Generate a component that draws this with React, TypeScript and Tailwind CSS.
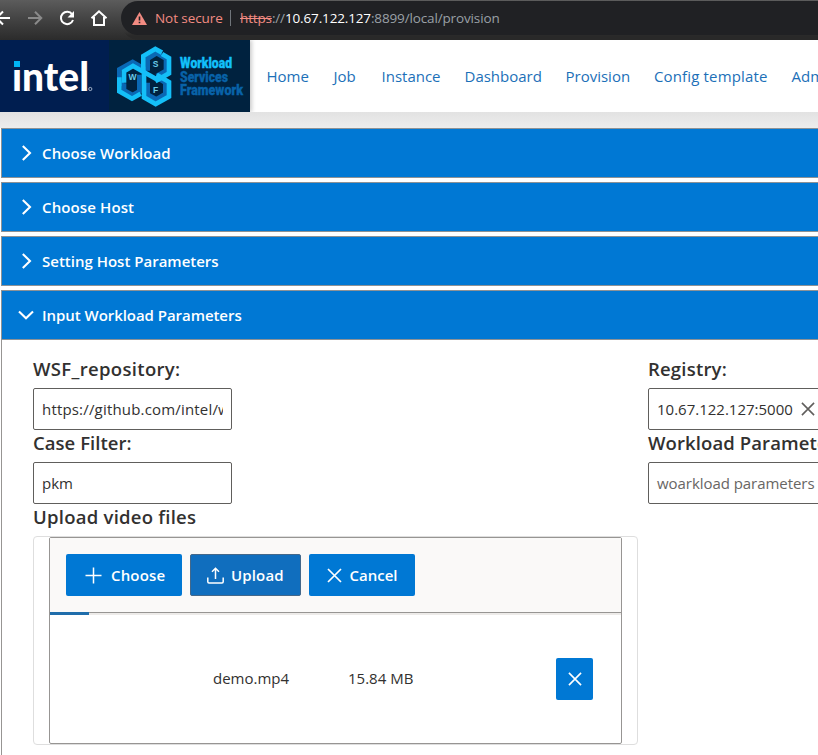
import React from "react";

const sans = "font-['Open_Sans','Noto_Sans',sans-serif]";

function Chevron({ down = false }: { down?: boolean }) {
  return (
    <svg width="16" height="16" viewBox="0 0 16 16" fill="none" stroke="#fff" strokeWidth="2.1" className="shrink-0">
      {down ? <path d="M1 4.500 8 11.200 15 4.500" /> : <path d="M4.800 1 12 8 4.800 15" />}
    </svg>
  );
}

function Cross({ color = "#fff", size = 15 }: { color?: string; size?: number }) {
  return (
    <svg width={size} height={size} viewBox="0 0 15 15" fill="none" stroke={color} strokeWidth="1.7" className="shrink-0">
      <path d="M1 1l13 13M14 1L1 14" />
    </svg>
  );
}

function BrowserBar() {
  return (
    <div className="flex h-10 w-full bg-linear-to-b from-[#5c5c5c] via-[#424242] to-[#2b2b2b]">
      <svg width="121" height="40" viewBox="0 0 121 40" fill="none" className="shrink-0">
        <path d="M10 18H-3M3 11.5-3.5 18 3 24.5" stroke="#fff" strokeWidth="2" />
        <path d="M28 18h12.500M35 11.700 41.300 18 35 24.300" stroke="#8a8a8a" strokeWidth="2" />
        <path d="M72.200 14.300A6.200 6.200 0 1 0 73 20" stroke="#fff" strokeWidth="2" />
        <path d="M74 11v6.500h-6.500z" fill="#fff" />
        <path d="M91.500 18.300 99 11.300l7.500 7M94 17v8h10v-8" stroke="#fff" strokeWidth="2" />
      </svg>
      <div className="h-full min-w-0 flex-1 rounded-l-[18px] bg-linear-to-b from-transparent from-80% to-[#292929] to-90%">
        <div className="mt-px flex h-[34px] items-center rounded-l-full bg-[#202124] pl-[11px]">
          <svg width="15" height="13" viewBox="0 0 15 13" className="shrink-0">
            <path d="M7.500 0 15 13H0z" fill="#f28b82" />
            <path d="M7.500 4.500v4M7.500 9.700v1.600" stroke="#202124" strokeWidth="1.600" />
          </svg>
          <span className="ml-[8px] w-[68px] shrink-0 whitespace-nowrap text-[13.500px] tracking-[-0.080px] text-[#f28b82]">Not secure</span>
          <span className="ml-[7px] h-4 w-px shrink-0 bg-[#70757a]" />
          <span className="ml-[9px] whitespace-nowrap text-[13.500px] tracking-[-0.140px] text-[#9aa0a6]">
            <span className="text-[#f28b82] line-through">https</span>://<span className="text-white">10.67.122.127</span>:8899/local/provision
          </span>
        </div>
      </div>
    </div>
  );
}

function Brand() {
  return (
    <svg width="250" height="72" viewBox="0 0 250 72" className="shrink-0">
      <rect width="250" height="72" fill="#001e50" />
      <rect x="109" width="141" height="72" fill="#00223f" />
      <text x="12" y="50.500" fontFamily="Lato" fontWeight="900" fontSize="40" textLength="77" lengthAdjust="spacingAndGlyphs" fill="#fff">intel</text>
      <rect x="11" y="18" width="10" height="11.300" fill="#001e50" />
      <rect x="14" y="21" width="6" height="6" fill="#00b4f5" />
      <circle cx="90.300" cy="49" r="1.600" fill="none" stroke="#dce6f5" strokeWidth=".7" />
      <g fill="none" strokeWidth="14" transform="translate(112 2) scale(.3333)">
        <g stroke="#0a68b4">
          <path d="M107 86V50L134 34L162 50V86L134 102" />
          <path d="M34 128L22 120V82L62 60L104 84" />
          <path d="M107 122V158L133 172L160 156V122L134 106" />
          <path d="M82 98V148L62 159L36 145V124" />
        </g>
        <g stroke="#14bff8">
          <path d="M94 92V42L130 21L150 32" />
          <path d="M150 36L171 48V94L130 118" />
          <path d="M36 122V88L63 72L134 112" />
          <path d="M22 106V148L60 170L86 155" />
          <path d="M96 94V166L131 186L171 164V120L134 98" />
        </g>
      </g>
      <g fontFamily="Liberation Sans" fontWeight="700" fontSize="8.500" textAnchor="middle" fill="#6ccce7">
        <text x="155.500" y="26.500">S</text>
        <text x="132.500" y="39.500">W</text>
        <text x="155.500" y="52.500">F</text>
      </g>
      <g fontFamily="Roboto" fontWeight="900" fontSize="14.500" strokeWidth=".35">
        <text x="180" y="28" textLength="52" lengthAdjust="spacingAndGlyphs" fill="#12c0fa" stroke="#12c0fa">Workload</text>
        <text x="180" y="41.500" textLength="48" lengthAdjust="spacingAndGlyphs" fill="#0862a8" stroke="#0862a8">Services</text>
        <text x="180" y="55" textLength="63" lengthAdjust="spacingAndGlyphs" fill="#0862a8" stroke="#0862a8">Framework</text>
      </g>
    </svg>
  );
}

function Nav() {
  return (
    <nav className="relative flex h-[72px] items-center overflow-hidden bg-white text-[15px] text-[#1c70b8]">
      <div className="shadow-[2px_0_4px_#0003]"><Brand /></div>
      <div className="ml-[16.500px] flex gap-[25px] whitespace-nowrap">
        <span className="w-[42px]">Home</span>
        <span className="w-[23px]">Job</span>
        <span className="w-[58px]">Instance</span>
        <span className="w-[76px]">Dashboard</span>
        <span className="w-[63.500px]">Provision</span>
        <span className="w-[112.500px] tracking-[0.15px]">Config template</span>
        <span>Admin</span>
      </div>
    </nav>
  );
}

function PanelHeader({ label, tracking }: { label: string; tracking: string }) {
  const open = label.startsWith("Input");
  return (
    <div className="flex h-[50px] items-center gap-2 border border-[#8d9296] bg-[#0078d4] pl-4 text-[15px] font-semibold text-white">
      <Chevron down={open} />
      <span className={`whitespace-nowrap ${tracking}`}>{label}</span>
    </div>
  );
}

function Field({ label, tracking, children }: { label: string; tracking: string; children: React.ReactNode }) {
  return (
    <div className="h-[74px]">
      <div className={`h-8 whitespace-nowrap pt-0.5 text-[18.500px] font-semibold leading-[22px] text-[#323130] ${tracking}`}>{label}</div>
      {children}
    </div>
  );
}

const box = "flex h-[42px] w-[199px] items-center rounded-[2px] border border-[#605e5c] bg-white px-2 text-[15px] text-[#323130]";

function Button({ className, children }: { className: string; children: React.ReactNode }) {
  return (
    <div className={`flex h-[42px] items-center rounded-[2px] text-[15px] font-semibold text-white ${className}`}>{children}</div>
  );
}

function Uploader() {
  return (
    <div className="h-[209px] w-[605px] rounded-[4px] border border-[#dedede] bg-white px-[15px]">
      <div className="h-[207px] rounded-[2px] border border-[#979593]">
        <div className="flex h-[75px] gap-2 border-b border-[#979593] bg-[#faf9f8] px-4 pt-4">
          <Button className="w-[116px] bg-[#0078d4] pl-[19px]">
            <svg width="17" height="17" viewBox="0 0 17 17" stroke="#fff" strokeWidth="1.500"><path d="M8.500.500v16M.500 8.500h16" /></svg>
            <span className="ml-[9px] tracking-[0.15px]">Choose</span>
          </Button>
          <Button className="w-[111px] border border-[#44688a] bg-[#106ebe] pl-4">
            <svg width="17" height="17" viewBox="0 0 17 17" fill="none" stroke="#fff" strokeWidth="1.500">
              <path d="M8.500 12V1.200M5 4.700l3.500-3.500L12 4.700M.800 10.500v4.200c0 .8.400 1.200 1.200 1.200h13c.8 0 1.200-.4 1.200-1.200v-4.200" />
            </svg>
            <span className="ml-[7px] tracking-[0.15px]">Upload</span>
          </Button>
          <Button className="w-[106px] bg-[#0078d4] pl-[17.500px]">
            <Cross />
            <span className="ml-2">Cancel</span>
          </Button>
        </div>
        <div className="h-0.5 bg-[#edebe9]"><div className="relative -top-px h-[3px] w-[39px] bg-[#1f6dab]" /></div>
        <div className="flex h-[127px] items-center pl-[163px] text-[15px] text-[#323130]">
          <span className="w-[135px]">demo.mp4</span>
          <span className="w-[208px]">15.84 MB</span>
          <div className="flex h-[42px] w-[37px] items-center justify-center rounded-[2px] bg-[#0078d4]"><Cross size={14} /></div>
        </div>
      </div>
    </div>
  );
}

export default function App() {
  return (
    <div className={`h-[755px] w-full overflow-hidden bg-white ${sans}`}>
      <BrowserBar />
      <Nav />
      <div className="h-4 bg-linear-to-b from-[#e2e2e2] to-[#ededed]" />
      <div className="ml-px flex w-[1264px] flex-col gap-1">
        <PanelHeader label="Choose Workload" tracking="tracking-[0.12px]" />
        <PanelHeader label="Choose Host" tracking="tracking-[0.12px]" />
        <PanelHeader label="Setting Host Parameters" tracking="tracking-normal" />
        <div>
          <PanelHeader label="Input Workload Parameters" tracking="tracking-[-0.05px]" />
          <div className="flex h-[420px] border-l border-[#979593] pl-[31px] pt-4">
            <div className="w-[615px]">
              <Field label="WSF_repository:" tracking="tracking-[0.33px]">
                <div className={box}><span className="overflow-hidden whitespace-nowrap tracking-[0.18px]">https://github.com/intel/workload-services-framework</span></div>
              </Field>
              <Field label="Case Filter:" tracking="tracking-[0.05px]">
                <div className={box}>pkm</div>
              </Field>
              <div className="h-8 pt-0.5 text-[18.500px] font-semibold leading-[22px] tracking-[0.25px] text-[#323130]">Upload video files</div>
              <Uploader />
            </div>
            <div>
              <Field label="Registry:" tracking="tracking-[0.2px]">
                <div className={box}>
                  <span className="w-[144px]">10.67.122.127:5000</span>
                  <Cross color="#605e5c" size={14} />
                </div>
              </Field>
              <Field label="Workload Parameters:" tracking="tracking-[0.1px]">
                <div className={box}><span className="whitespace-nowrap tracking-[-0.05px] text-[#686664]">woarkload parameters</span></div>
              </Field>
            </div>
          </div>
        </div>
      </div>
    </div>
  );
}
